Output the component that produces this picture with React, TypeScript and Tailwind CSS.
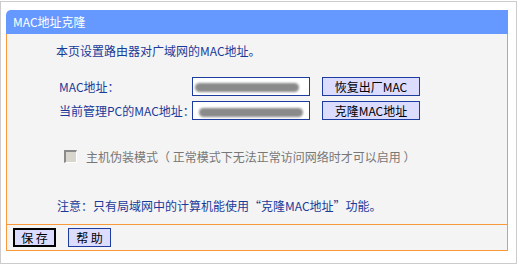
import React from "react";

const FONT = { fontFamily: '"SimSun", "Noto Sans CJK SC", "Liberation Sans", sans-serif' };

const BlurField = ({ offset }: { offset: string }) => (
  <div className="w-[118px] h-[19px] shrink-0 border border-[#1c3ca0] bg-white flex items-center overflow-hidden">
    <div className={`h-[9px] w-[104px] rounded-full bg-[#8a8a8a] blur-[1px] ${offset}`} />
  </div>
);

const BlueButton = ({ label }: { label: string }) => (
  <button className="w-[98px] h-[19px] shrink-0 border border-[#1c3ca0] bg-[#dcdcff] text-black text-[12px] leading-none flex items-center justify-center whitespace-nowrap">
    {label}
  </button>
);

export default function App() {
  return (
    <div className="w-[518px] h-[265px] bg-white" style={FONT}>
      <div className="mt-[1px] w-[517px] h-[263px] border border-[#cccccc] pl-[5px] pt-[8px]">
        <div className="w-[502px]">
          {/* header */}
          <div className="h-[24px] bg-[#6699ff] rounded-tl-[5px] pl-[7px] flex items-center text-white text-[12px]">
            MAC地址克隆
          </div>

          {/* content */}
          <div className="h-[191px] bg-[#f4f4f4] border-x border-b border-[#f8993b] text-[#1a3a99] text-[12px] leading-[12px] whitespace-nowrap">
            <div className="pt-[11px] pl-[49px]">本页设置路由器对广域网的MAC地址。</div>

            <div className="mt-[20px] pl-[52px] flex items-center">
              <div className="w-[133px] shrink-0">MAC地址：</div>
              <BlurField offset="ml-[2px] mt-[2px]" />
              <div className="ml-[12px]">
                <BlueButton label="恢复出厂MAC" />
              </div>
            </div>

            <div className="mt-[5px] pl-[52px] flex items-center">
              <div className="w-[133px] shrink-0">当前管理PC的MAC地址：</div>
              <BlurField offset="ml-[6px] mt-[3px]" />
              <div className="ml-[12px]">
                <BlueButton label="克隆MAC地址" />
              </div>
            </div>

            <div className="mt-[30px] pl-[57px] flex items-center text-[#777777]">
              <div className="w-[13px] h-[13px] bg-[#d8d5cc] border-t-2 border-l-2 border-[#8a8a8a] border-r border-b border-r-white border-b-white" />
              <span className="ml-[9px]">主机伪装模式（ 正常模式下无法正常访问网络时才可以启用 ）</span>
            </div>

            <div className="mt-[37px] pl-[50px]">注意：只有局域网中的计算机能使用“克隆MAC地址”功能。</div>
          </div>

          {/* buttons */}
          <div className="h-[26px] bg-[#f4f4f4] border-x border-b border-[#f8993b] pl-[6px] pt-[3px] flex items-start gap-[12px]">
            <button className="w-[43px] h-[19px] border-2 border-black bg-[#dcdcff] text-black text-[12px] leading-none flex items-center justify-center">
              保 存
            </button>
            <button className="w-[43px] h-[19px] border border-[#1c3ca0] bg-[#dcdcff] text-black text-[12px] leading-none flex items-center justify-center">
              帮 助
            </button>
          </div>
        </div>
      </div>
    </div>
  );
}
